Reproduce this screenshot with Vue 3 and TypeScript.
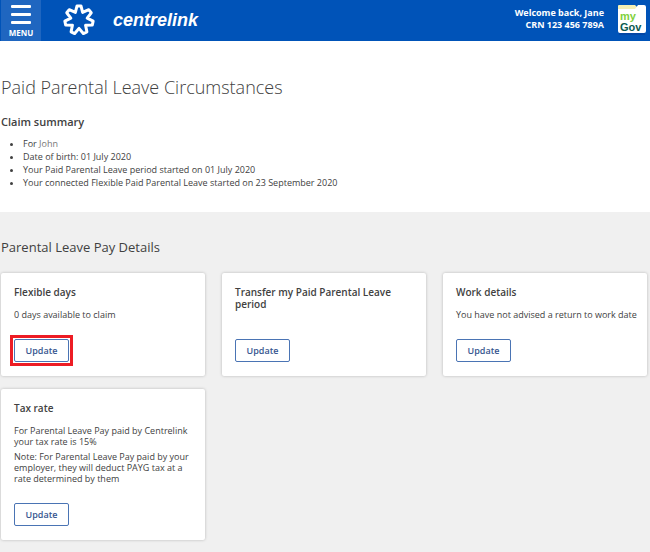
<script setup lang="ts">
interface Card {
  title: string
  text: string[]
  highlighted?: boolean
}

const cards: Card[] = [
  { title: 'Flexible days', text: ['0 days available to claim'], highlighted: true },
  { title: 'Transfer my Paid Parental Leave period', text: [] },
  { title: 'Work details', text: ['You have not advised a return to work date'] },
  {
    title: 'Tax rate',
    text: [
      'For Parental Leave Pay paid by Centrelink your tax rate is 15%',
      'Note: For Parental Leave Pay paid by your employer, they will deduct PAYG tax at a rate determined by them',
    ],
  },
]

// Seven-petalled outline: each petal has two tip corners and a valley after it.
function star(petals: number, outer: number, inner: number, tip: number): string {
  const step = (Math.PI * 2) / petals
  const at = (r: number, a: number) => `${(r * Math.sin(a)).toFixed(2)},${(-r * Math.cos(a)).toFixed(2)}`
  return Array.from({ length: petals }, (_, i) => {
    const a = i * step
    return `${at(outer, a - tip)} ${at(outer, a + tip)} ${at(inner, a + step / 2)}`
  }).join(' ')
}

const starPoints = star(7, 14.2, 8.4, 0.14)
</script>

<template>
  <div class="page">
    <header class="bar">
      <button class="menu" type="button">
        <span class="lines"><i></i><i></i><i></i></span>
        MENU
      </button>
      <a class="brand" href="#">
        <svg class="star" viewBox="-16 -16 32 32" aria-hidden="true">
          <polygon :points="starPoints" />
        </svg>
        <span class="name">centrelink</span>
      </a>
      <div class="user">
        <div>Welcome back, Jane</div>
        <div>CRN 123 456 789A</div>
      </div>
      <a class="mygov" href="#">
        <svg viewBox="0 0 30 32" aria-hidden="true">
          <path d="M0 8V2a1 1 0 0 1 1-1h16l3 3v4z" fill="#f5efb4" />
          <path d="M0 5h17l3-4h6a2 2 0 0 1 2 2v24a2 2 0 0 1-2 2H2a2 2 0 0 1-2-2z" fill="#fff" />
          <path d="M1 30h26" stroke="#073c94" stroke-width="1" />
        </svg>
        <span class="mygov-text"><b class="my">my</b><b class="gov">Gov</b></span>
      </a>
    </header>

    <main>
      <section class="summary">
        <h1>Paid Parental Leave Circumstances</h1>
        <h2>Claim summary</h2>
        <ul>
          <li>For <span class="person">John</span></li>
          <li>Date of birth: 01 July 2020</li>
          <li>Your Paid Parental Leave period started on 01 July 2020</li>
          <li>Your connected Flexible Paid Parental Leave started on 23 September 2020</li>
        </ul>
      </section>

      <section class="details">
        <h2>Parental Leave Pay Details</h2>
        <div class="cards">
          <article v-for="card in cards" :key="card.title" class="card">
            <h3>{{ card.title }}</h3>
            <p v-for="line in card.text" :key="line">{{ line }}</p>
            <div class="action" :class="{ highlighted: card.highlighted }">
              <button type="button" class="update">Update</button>
            </div>
          </article>
        </div>
      </section>
    </main>
  </div>
</template>

<style>
body {
  margin: 0;
}
</style>

<style scoped>
.page {
  display: flex;
  flex-direction: column;
  min-height: 100vh;
  background: #fff;
  color: #414141;
  font-family: "Open Sans", "Noto Sans", sans-serif;
  font-size: 9px;
  line-height: 13px;
}
h1, h2, h3, p, ul {
  margin: 0;
}
a {
  color: inherit;
  text-decoration: none;
}
.bar {
  display: flex;
  align-items: stretch;
  height: 41px;
  background: #0053b8;
  color: #fff;
}
.menu {
  display: flex;
  flex-direction: column;
  align-items: center;
  gap: 3px;
  width: 40px;
  margin: 0 0 0 1px;
  padding: 5px 0 0;
  border: 0;
  background: #1f66c0;
  color: #fff;
  font: 700 8px/12px "Open Sans", sans-serif;
}
.lines {
  display: flex;
  flex-direction: column;
  gap: 5px;
}
.lines i {
  width: 20px;
  height: 3px;
  border-radius: 1px;
  background: #fff;
}
.brand {
  display: flex;
  align-items: center;
  gap: 18px;
  margin-left: 22px;
  padding-bottom: 2px;
}
.star {
  width: 32px;
  height: 32px;
  fill: none;
  stroke: #fff;
  stroke-width: 3;
  stroke-linejoin: round;
}
.name {
  font: italic 700 18px/24px "Liberation Sans", sans-serif;
}
.user {
  margin-left: auto;
  padding-top: 7px;
  text-align: right;
  font-weight: 700;
  line-height: 12px;
}
.mygov {
  display: grid;
  width: 30px;
  height: 32px;
  margin: 4px 2px 0 14px;
}
.mygov svg,
.mygov-text {
  grid-area: 1 / 1;
}
.mygov-text {
  display: flex;
  flex-direction: column;
  padding: 7px 0 0 2px;
  font: 700 11px/11px "Liberation Sans", sans-serif;
}
.my {
  color: #7ed03a;
}
.gov {
  color: #0a5a50;
}
main {
  display: flex;
  flex: 1;
  flex-direction: column;
}
.summary {
  padding: 32px 1px 23px;
}
.summary h1 {
  font-size: 18px;
  font-weight: 300;
  line-height: 28px;
}
.summary h2 {
  margin-top: 13px;
  font-size: 11px;
  font-weight: 600;
  line-height: 16px;
}
.summary ul {
  margin-top: 7px;
  padding-left: 22px;
}
.person {
  color: #777;
}
.details {
  flex: 1;
  padding: 24px 3px 10px 1px;
  background: #f0f0f0;
}
.details h2 {
  font-size: 13px;
  font-weight: 400;
  line-height: 22px;
}
.cards {
  display: grid;
  grid-template-columns: repeat(3, 1fr);
  gap: 13px 17px;
  margin-top: 15px;
}
.card {
  display: flex;
  flex-direction: column;
  align-items: flex-start;
  box-sizing: border-box;
  min-height: 103px;
  padding: 13px 6px 14px 13px;
  border-radius: 2px;
  background: #fff;
  box-shadow: 0 0 3px rgba(0, 0, 0, 0.25);
}
.card h3 {
  margin-bottom: 7px;
  font-size: 10px;
  font-weight: 600;
  line-height: 12px;
}
.card p {
  margin-top: 4px;
  line-height: 11px;
}
.action {
  margin-top: auto;
  padding-top: 19px;
}
.update {
  position: relative;
  display: block;
  width: 55px;
  height: 23px;
  padding: 0;
  border: 1px solid #4a74b4;
  border-radius: 2px;
  background: #fff;
  color: #36568f;
  font: 600 9px/20px "Open Sans", sans-serif;
}
.highlighted .update::after {
  content: "";
  position: absolute;
  inset: -5px;
  border: 3px solid #ed1c24;
}
</style>
